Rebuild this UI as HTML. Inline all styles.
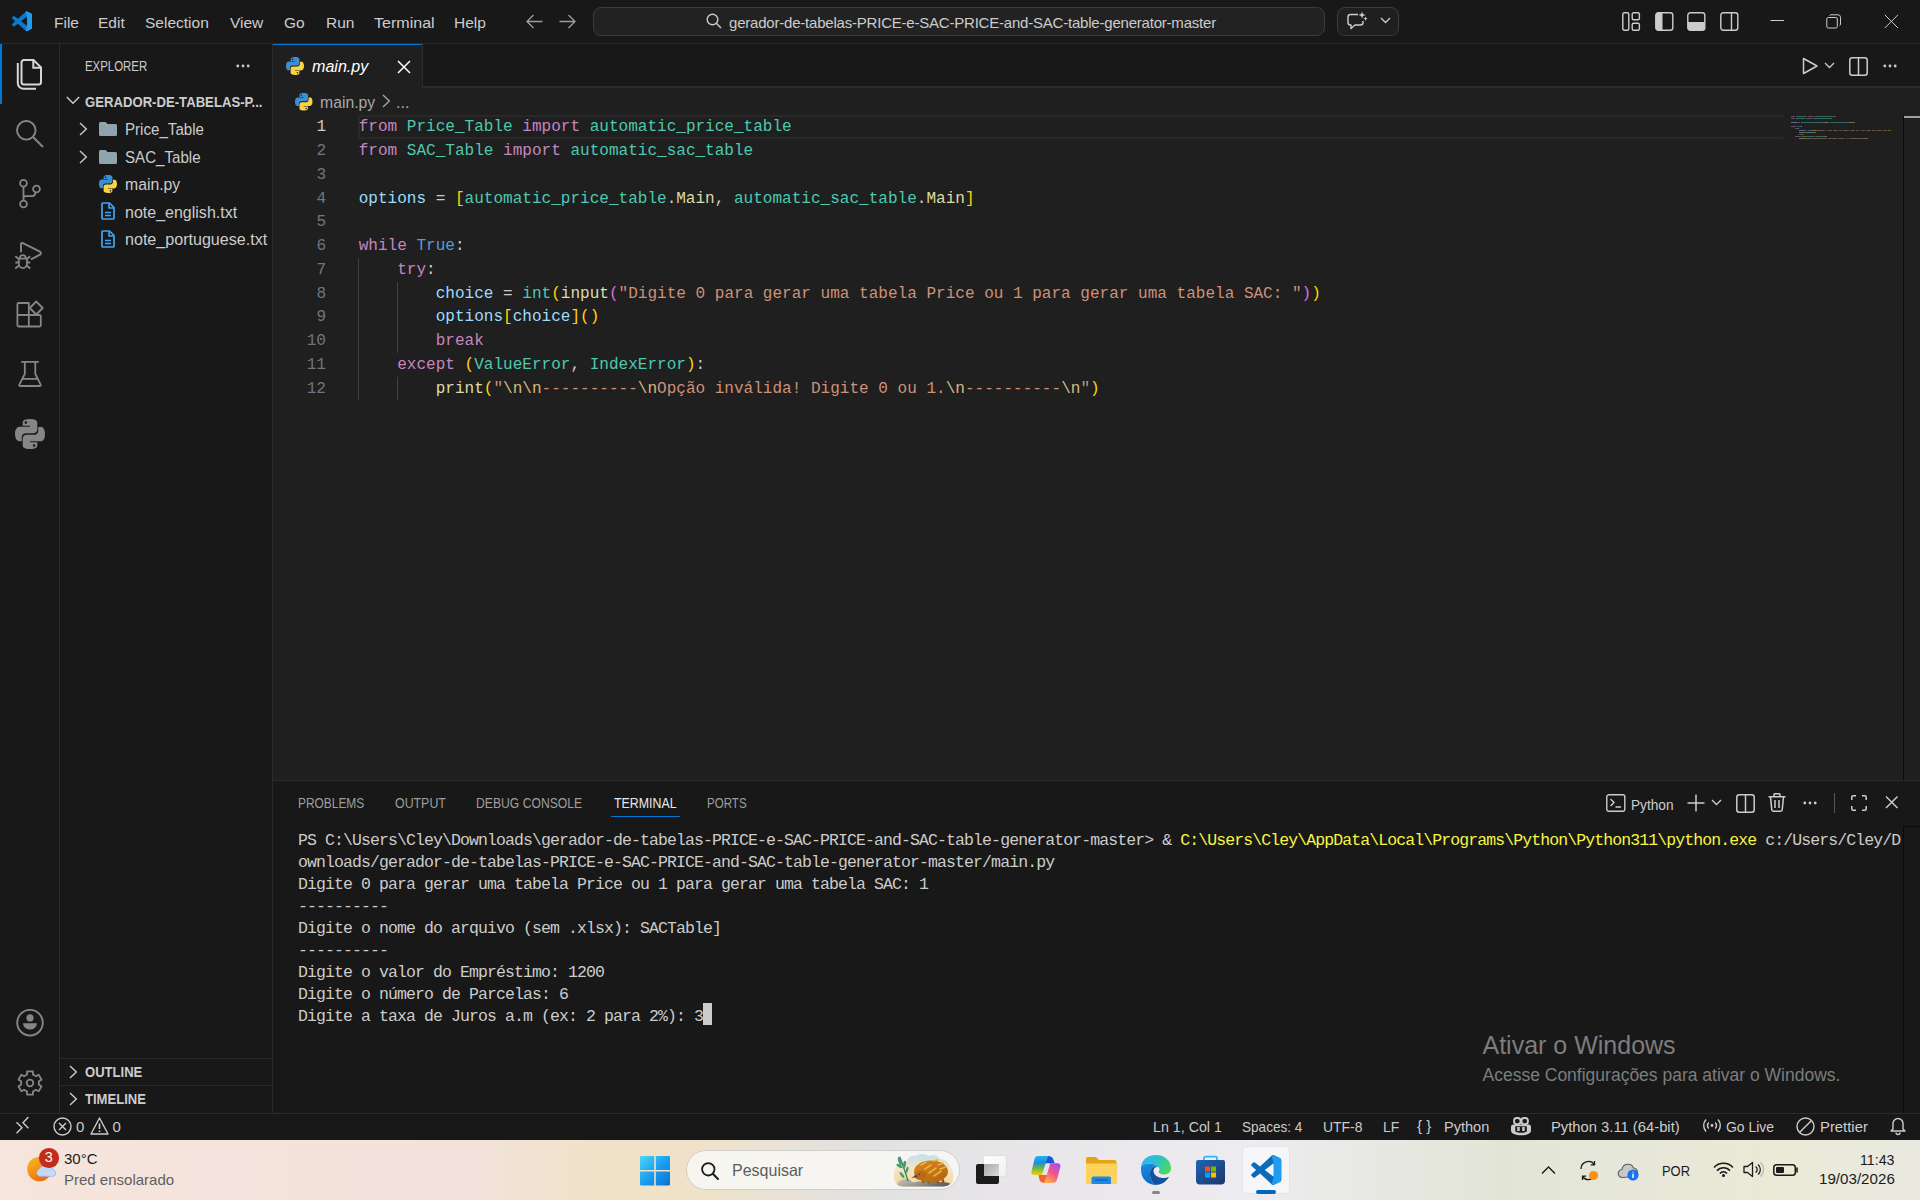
<!DOCTYPE html>
<html><head><meta charset="utf-8">
<style>
*{box-sizing:border-box;margin:0;padding:0}
html,body{width:1920px;height:1200px;overflow:hidden;background:#181818;font-family:"Liberation Sans",sans-serif;color:#cccccc}
.a{position:absolute;white-space:pre}
.sx{display:inline-block;transform-origin:0 50%}
svg{position:absolute;overflow:visible}
.mono{font-family:"Liberation Mono",monospace}
/* regions */
#title{position:absolute;left:0;top:0;width:1920px;height:44px;background:#181818;border-bottom:1px solid #2b2b2b}
#act{position:absolute;left:0;top:44px;width:60px;height:1069px;background:#181818;border-right:1px solid #2b2b2b}
#side{position:absolute;left:60px;top:44px;width:213px;height:1069px;background:#181818;border-right:1px solid #2b2b2b}
#tabs{position:absolute;left:273px;top:44px;width:1647px;height:44px;background:#181818;border-bottom:2px solid #2b2b2b}
#editor{position:absolute;left:273px;top:88px;width:1647px;height:692px;background:#1f1f1f}
#panel{position:absolute;left:273px;top:780px;width:1647px;height:333px;background:#181818;border-top:1px solid #2b2b2b}
#status{position:absolute;left:0;top:1113px;width:1920px;height:27px;background:#181818;border-top:1px solid #2b2b2b}
#taskbar{position:absolute;left:0;top:1140px;width:1920px;height:60px;background:linear-gradient(90deg,#f5e5dd 0px,#f2e2db 480px,#f0e2c8 590px,#efe2c9 700px,#e9e2d6 780px,#e2e1e0 860px,#e7e5e8 1000px,#eeecf0 1250px,#e9e9e6 1350px,#e2e5d6 1500px,#e6e7da 1620px,#ebe9d6 1760px,#e9e9e1 1920px)}
.menu{font-size:15.5px;color:#cccccc;top:13px;line-height:20px}
.code{font-family:"Liberation Mono",monospace;font-size:16.04px;line-height:23.75px;height:23.75px;margin-top:0.9px}
.ln{font-family:"Liberation Mono",monospace;font-size:16.04px;line-height:23.75px;color:#6e7681;text-align:right;width:40px;left:286px;margin-top:0.9px}
.k{color:#c586c0}.t{color:#4ec9b0}.v{color:#9cdcfe}.c{color:#569cd6}.f{color:#dcdcaa}.s{color:#ce9178}.e{color:#d7ba7d}.p{color:#cccccc}
.b1{color:#ffd700}.b2{color:#da70d6}
.term{font-family:"Liberation Mono",monospace;font-size:16.5px;letter-spacing:-0.9px;line-height:22px;color:#cccccc;left:298px}
</style></head><body>
<div id="title"></div>
<div id="act"></div>
<div id="side"></div>
<div id="tabs"></div>
<div id="editor"></div>
<div id="panel"></div>
<div id="status"></div>
<div id="taskbar"></div>

<!-- title bar menus -->
<div class="a menu" style="left:54px">File</div>
<div class="a menu" style="left:98px">Edit</div>
<div class="a menu" style="left:145px">Selection</div>
<div class="a menu" style="left:230px">View</div>
<div class="a menu" style="left:284px">Go</div>
<div class="a menu" style="left:326px">Run</div>
<div class="a menu" style="left:374px"><span class="sx" style="transform:scaleX(1.035)">Terminal</span></div>
<div class="a menu" style="left:454px">Help</div>


<!-- VS Code logo -->
<svg style="left:12px;top:10.5px" width="20" height="20.5" viewBox="0 0 100 100"><path fill="#0a7acc" d="M96.46 10.8L75.86.87a6.23 6.23 0 0 0-7.1 1.2L29.33 38.04 12.15 25a4.16 4.16 0 0 0-5.32.24l-5.5 5a4.17 4.17 0 0 0 0 6.16L16.23 50 1.330 63.6a4.17 4.17 0 0 0 0 6.16l5.5 5a4.16 4.16 0 0 0 5.32.24l17.18-13.040 39.43 35.97a6.22 6.22 0 0 0 7.1 1.2l20.6-9.92A6.25 6.25 0 0 0 100 83.6V16.4a6.25 6.25 0 0 0-3.54-5.6zM75.01 72.7L45.1 50l29.9-22.7z"/><path fill="#1f9cf0" d="M75.86.87a6.23 6.23 0 0 0-7.1 1.2L68 2.8 75.01 27.3V72.7L68 97.2l.76.7a6.22 6.22 0 0 0 7.1 1.2l20.6-9.92A6.25 6.25 0 0 0 100 83.6V16.4a6.25 6.25 0 0 0-3.54-5.6z"/></svg>
<!-- nav arrows -->
<svg style="left:526px;top:14px" width="17" height="15" viewBox="0 0 17 15"><path d="M16.5 7.5H1.5M7.5 1L1 7.5 7.5 14" fill="none" stroke="#9d9d9d" stroke-width="1.3"/></svg>
<svg style="left:559px;top:14px" width="17" height="15" viewBox="0 0 17 15"><path d="M0.5 7.5H15.5M9.5 1L16 7.5 9.5 14" fill="none" stroke="#9d9d9d" stroke-width="1.3"/></svg>
<!-- command center -->
<div class="a" style="left:593px;top:7px;width:732px;height:29px;border:1px solid #3c3c3c;border-radius:8px;background:#222222"></div>
<svg style="left:706px;top:13px" width="16" height="16" viewBox="0 0 16 16"><circle cx="6.5" cy="6.5" r="5.3" fill="none" stroke="#cccccc" stroke-width="1.4"/><path d="M10.3 10.3L15 15" stroke="#cccccc" stroke-width="1.5"/></svg>
<div class="a" style="left:729px;top:12.5px;font-size:15px;line-height:20px;color:#cccccc;letter-spacing:-0.21px">gerador-de-tabelas-PRICE-e-SAC-PRICE-and-SAC-table-generator-master</div>
<!-- copilot button -->
<div class="a" style="left:1337px;top:7px;width:62px;height:29px;border:1px solid #3c3c3c;border-radius:8px;background:#1f1f1f"></div>
<svg style="left:1346px;top:11px" width="22" height="20" viewBox="0 0 22 20"><path d="M12 3.5H4.5A2.5 2.5 0 0 0 2 6v5.5A2.5 2.5 0 0 0 4.5 14H5v3.5L9 14h5.5A2.5 2.5 0 0 0 17 11.5V10" fill="none" stroke="#cccccc" stroke-width="1.4" stroke-linejoin="round"/><path d="M16 0.5l.9 2.6 2.6.9-2.6.9-.9 2.6-.9-2.6-2.6-.9 2.6-.9z" fill="#cccccc"/><path d="M19.5 5.5l.6 1.6 1.6.6-1.6.6-.6 1.6-.6-1.6-1.6-.6 1.6-.6z" fill="#cccccc"/></svg>
<svg style="left:1380px;top:17px" width="11" height="7" viewBox="0 0 11 7"><path d="M1 1l4.5 4.5L10 1" fill="none" stroke="#cccccc" stroke-width="1.3"/></svg>
<!-- layout icons -->
<svg style="left:1622px;top:12px" width="19" height="19" viewBox="0 0 19 19"><rect x="0.8" y="0.8" width="6" height="17.4" rx="1.5" fill="none" stroke="#cccccc" stroke-width="1.4"/><rect x="10.2" y="0.8" width="7.2" height="7" rx="1.5" fill="none" stroke="#cccccc" stroke-width="1.4"/><rect x="10.2" y="11.2" width="7.2" height="7" rx="1.5" fill="none" stroke="#cccccc" stroke-width="1.4"/></svg>
<svg style="left:1655px;top:12px" width="19" height="19" viewBox="0 0 19 19"><rect x="0.8" y="0.8" width="17" height="17.4" rx="2.5" fill="none" stroke="#cccccc" stroke-width="1.4"/><path d="M3 0.8H7.5V18.2H3A2.2 2.2 0 0 1 0.8 16V3A2.2 2.2 0 0 1 3 0.8z" fill="#cccccc"/></svg>
<svg style="left:1687px;top:12px" width="19" height="19" viewBox="0 0 19 19"><rect x="0.8" y="0.8" width="17" height="17.4" rx="2.5" fill="none" stroke="#cccccc" stroke-width="1.4"/><path d="M0.8 10H17.8V16A2.2 2.2 0 0 1 15.6 18.2H3A2.2 2.2 0 0 1 0.8 16z" fill="#cccccc"/></svg>
<svg style="left:1720px;top:12px" width="19" height="19" viewBox="0 0 19 19"><rect x="0.8" y="0.8" width="17" height="17.4" rx="2.5" fill="none" stroke="#cccccc" stroke-width="1.4"/><path d="M11.5 1V18" stroke="#cccccc" stroke-width="1.4"/></svg>
<!-- window controls -->
<svg style="left:1770px;top:15px" width="15" height="12" viewBox="0 0 15 12"><path d="M0.5 5.5H14" stroke="#cccccc" stroke-width="1"/></svg>
<svg style="left:1826px;top:14px" width="16" height="16" viewBox="0 0 16 16"><rect x="0.8" y="3.5" width="10.5" height="10.5" rx="1.5" fill="none" stroke="#cccccc" stroke-width="1"/><path d="M3.5 1.5A1.8 1.8 0 0 1 5 0.8H12A2.5 2.5 0 0 1 14.5 3.3V10A1.8 1.8 0 0 1 13.7 11.6" fill="none" stroke="#cccccc" stroke-width="1"/></svg>
<svg style="left:1884px;top:14px" width="15" height="15" viewBox="0 0 15 15"><path d="M0.8 0.8L14 14M14 0.8L0.8 14" stroke="#cccccc" stroke-width="1"/></svg>

<!-- activity bar -->
<div class="a" style="left:0;top:44px;width:2px;height:60px;background:#0078d4"></div>
<svg style="left:16px;top:58px" width="27" height="32" viewBox="0 0 27 32"><path d="M8 2H17.5L25 9.5V24A2.5 2.5 0 0 1 22.5 26.5H8A2.5 2.5 0 0 1 5.5 24V4.5A2.5 2.5 0 0 1 8 2z" fill="none" stroke="#d7d7d7" stroke-width="2"/><path d="M17.3 2.5V9.7H24.5" fill="none" stroke="#d7d7d7" stroke-width="2"/><path d="M1.8 5V25A5.8 5.8 0 0 0 7.6 30.8H20" fill="none" stroke="#d7d7d7" stroke-width="2"/></svg>
<svg style="left:16px;top:120px" width="28" height="28" viewBox="0 0 28 28"><circle cx="10.3" cy="10.3" r="9.3" fill="none" stroke="#868686" stroke-width="1.9"/><path d="M17 17L27 27" stroke="#868686" stroke-width="2"/></svg>
<svg style="left:18px;top:178px" width="24" height="32" viewBox="0 0 24 32"><circle cx="5.5" cy="5.3" r="3.4" fill="none" stroke="#868686" stroke-width="1.8"/><circle cx="5.5" cy="26" r="3.4" fill="none" stroke="#868686" stroke-width="1.8"/><circle cx="18.5" cy="11" r="3.4" fill="none" stroke="#868686" stroke-width="1.8"/><path d="M5.5 8.7V22.6M17.5 14.3Q17 18.2 13.5 18.2H7.5Q5.5 18.2 5.5 20.5" fill="none" stroke="#868686" stroke-width="1.8"/></svg>
<svg style="left:10px;top:235px" width="40" height="40" viewBox="0 0 40 40"><path d="M11 17.2V9.2Q11 7.4 12.8 8.2L30 16.6Q31.8 18.5 30 19.6L21 24.3" fill="none" stroke="#868686" stroke-width="1.9" stroke-linejoin="round"/><path d="M9.9 23.3A2.9 3.2 0 0 1 15.7 23.3M8.8 23.7H17M8.8 23.7V28.5A4.1 4.6 0 0 0 17 28.5V23.7M5.3 21.3L8.8 24M17 24L20.2 21.3M5.3 27.5H8.8M17 27.5H20.2M5.3 33.5L9 30.5M16.8 30.5L20.2 33.5" fill="none" stroke="#868686" stroke-width="1.8"/></svg>
<svg style="left:10px;top:290px" width="40" height="40" viewBox="0 0 40 40"><path d="M8.6 13H18.8V36.5H8.6A1.2 1.2 0 0 1 7.4 35.3V14.2A1.2 1.2 0 0 1 8.6 13zM7.4 25H29.6A1.2 1.2 0 0 1 30.8 26.2V35.3A1.2 1.2 0 0 1 29.6 36.5H18.8" fill="none" stroke="#868686" stroke-width="1.8"/><path d="M26.2 11.5L32.7 18 26.2 24.5 19.7 18z" fill="none" stroke="#868686" stroke-width="1.8" stroke-linejoin="round"/></svg>
<svg style="left:18px;top:360px" width="24" height="28" viewBox="0 0 24 28"><path d="M3.2 1.8H20.8M6.8 1.8V14L1.3 24.6A1 1 0 0 0 2.2 26H21.8A1 1 0 0 0 22.7 24.6L17.3 14V1.8M4.3 18.8H19.7" fill="none" stroke="#868686" stroke-width="1.8" stroke-linejoin="round"/></svg>
<svg style="left:15px;top:419px" width="30" height="30" viewBox="0 0 16 16"><path fill="#868686" d="M7.9 0C3.9 0 4.1 1.8 4.1 1.8v1.8h3.9v.5H2.6S0 3.9 0 7.9s2.3 3.9 2.3 3.9h1.3V9.9s-.1-2.3 2.3-2.3h3.8s2.2 0 2.2-2.1V1.9S12.2 0 7.9 0zM5.8 1.2a.7.7 0 1 1 0 1.4.7.7 0 0 1 0-1.4z"/><path fill="#868686" d="M8.1 16c4 0 3.8-1.8 3.8-1.8v-1.8H8v-.5h5.4s2.6.3 2.6-3.8-2.3-3.9-2.3-3.9h-1.3v1.9s.1 2.3-2.3 2.3H6.3s-2.2 0-2.2 2.1v3.6S3.8 16 8.1 16zm2.1-1.2a.7.7 0 1 1 0-1.4.7.7 0 0 1 0 1.4z"/></svg>
<svg style="left:16px;top:1009px" width="28" height="28" viewBox="0 0 28 28"><circle cx="14" cy="13.7" r="12.8" fill="none" stroke="#868686" stroke-width="1.9"/><circle cx="14" cy="8.9" r="3.6" fill="#868686"/><path d="M7 14.3H21A7 6.3 0 0 1 7 14.3z" fill="#868686"/></svg>
<svg style="left:17px;top:1070px" width="26" height="26" viewBox="0 0 26 26"><path d="M10.07 4.49 L10.10 1.36 L15.90 1.36 L15.93 4.49 L18.90 6.21 L21.63 4.66 L24.54 9.69 L21.83 11.28 L21.83 14.72 L24.54 16.31 L21.63 21.34 L18.90 19.79 L15.93 21.51 L15.90 24.64 L10.10 24.64 L10.07 21.51 L7.10 19.79 L4.37 21.34 L1.46 16.31 L4.17 14.72 L4.17 11.28 L1.46 9.69 L4.37 4.66 L7.10 6.21z" fill="none" stroke="#868686" stroke-width="1.8" stroke-linejoin="round"/><circle cx="13" cy="13" r="3.3" fill="none" stroke="#868686" stroke-width="1.8"/></svg>

<!-- sidebar -->
<div class="a" style="left:85px;top:58px;font-size:13.75px;line-height:18px;color:#cccccc"><span class="sx" style="transform:scaleX(0.83)">EXPLORER</span></div>
<svg style="left:236px;top:64px" width="14" height="4" viewBox="0 0 14 4"><circle cx="1.8" cy="2" r="1.4" fill="#cccccc"/><circle cx="7" cy="2" r="1.4" fill="#cccccc"/><circle cx="12.2" cy="2" r="1.4" fill="#cccccc"/></svg>
<svg style="left:66px;top:96px" width="14" height="9" viewBox="0 0 14 9"><path d="M0.8 1L7 7.3 13.2 1" fill="none" stroke="#cccccc" stroke-width="1.4"/></svg>
<div class="a" style="left:85px;top:94px;font-size:13.75px;line-height:18px;font-weight:bold;color:#cccccc"><span class="sx" style="transform:scaleX(0.955)">GERADOR-DE-TABELAS-P...</span></div>
<svg style="left:79px;top:122px" width="9" height="14" viewBox="0 0 9 14"><path d="M1 1L7.3 7 1 13" fill="none" stroke="#cccccc" stroke-width="1.4"/></svg>
<svg style="left:99px;top:122px" width="18" height="14" viewBox="0 0 18 14"><path d="M0 1.5A1.5 1.5 0 0 1 1.5 0H6.5L8.5 2H16.5A1.5 1.5 0 0 1 18 3.5V12.5A1.5 1.5 0 0 1 16.5 14H1.5A1.5 1.5 0 0 1 0 12.5z" fill="#90a4ae"/></svg>
<div class="a" style="left:125px;top:119px;font-size:16.25px;line-height:20px;color:#cccccc"><span class="sx" style="transform:scaleX(0.93)">Price_Table</span></div>
<svg style="left:79px;top:150px" width="9" height="14" viewBox="0 0 9 14"><path d="M1 1L7.3 7 1 13" fill="none" stroke="#cccccc" stroke-width="1.4"/></svg>
<svg style="left:99px;top:150px" width="18" height="14" viewBox="0 0 18 14"><path d="M0 1.5A1.5 1.5 0 0 1 1.5 0H6.5L8.5 2H16.5A1.5 1.5 0 0 1 18 3.5V12.5A1.5 1.5 0 0 1 16.5 14H1.5A1.5 1.5 0 0 1 0 12.5z" fill="#90a4ae"/></svg>
<div class="a" style="left:125px;top:146.5px;font-size:16.25px;line-height:20px;color:#cccccc"><span class="sx" style="transform:scaleX(0.93)">SAC_Table</span></div>
<svg style="left:99px;top:175px" width="18" height="18" viewBox="0 0 16 16" class="py"><path fill="#3a8ed2" d="M7.9 0C3.9 0 4.1 1.8 4.1 1.8v1.8h3.9v.5H2.6S0 3.9 0 7.9s2.3 3.9 2.3 3.9h1.3V9.9s-.1-2.3 2.3-2.3h3.8s2.2 0 2.2-2.1V1.9S12.2 0 7.9 0zM5.8 1.2a.7.7 0 1 1 0 1.4.7.7 0 0 1 0-1.4z"/><path fill="#f7d345" d="M8.1 16c4 0 3.8-1.8 3.8-1.8v-1.8H8v-.5h5.4s2.6.3 2.6-3.8-2.3-3.9-2.3-3.9h-1.3v1.9s.1 2.3-2.3 2.3H6.3s-2.2 0-2.2 2.1v3.6S3.8 16 8.1 16zm2.1-1.2a.7.7 0 1 1 0-1.4.7.7 0 0 1 0 1.4z"/></svg>
<div class="a" style="left:125px;top:174.3px;font-size:16.25px;line-height:20px;color:#cccccc"><span class="sx" style="transform:scaleX(0.97)">main.py</span></div>
<svg style="left:101px;top:202px" width="14" height="18" viewBox="0 0 14 18"><path d="M2 1H8.5L13 5.5V16A1 1 0 0 1 12 17H2A1 1 0 0 1 1 16V2A1 1 0 0 1 2 1z" fill="none" stroke="#42a5f5" stroke-width="1.7" stroke-linejoin="round"/><path d="M8 1.5V6H12.5M4 10.5H10M4 13.5H10" fill="none" stroke="#42a5f5" stroke-width="1.6"/></svg>
<div class="a" style="left:125px;top:201.5px;font-size:16.25px;line-height:20px;color:#cccccc"><span class="sx" style="transform:scaleX(0.985)">note_english.txt</span></div>
<svg style="left:101px;top:229.5px" width="14" height="18" viewBox="0 0 14 18"><path d="M2 1H8.5L13 5.5V16A1 1 0 0 1 12 17H2A1 1 0 0 1 1 16V2A1 1 0 0 1 2 1z" fill="none" stroke="#42a5f5" stroke-width="1.7" stroke-linejoin="round"/><path d="M8 1.5V6H12.5M4 10.5H10M4 13.5H10" fill="none" stroke="#42a5f5" stroke-width="1.6"/></svg>
<div class="a" style="left:125px;top:228.5px;font-size:16.25px;line-height:20px;color:#cccccc"><span class="sx" style="transform:scaleX(0.99)">note_portuguese.txt</span></div>
<!-- outline / timeline -->
<div class="a" style="left:60px;top:1058px;width:212px;height:1px;background:#2b2b2b"></div>
<div class="a" style="left:60px;top:1085px;width:212px;height:1px;background:#2b2b2b"></div>
<svg style="left:69px;top:1065px" width="9" height="14" viewBox="0 0 9 14"><path d="M1 1L7.3 7 1 13" fill="none" stroke="#cccccc" stroke-width="1.4"/></svg>
<div class="a" style="left:85px;top:1064px;font-size:13.75px;line-height:18px;font-weight:bold;color:#cccccc"><span class="sx" style="transform:scaleX(0.95)">OUTLINE</span></div>
<svg style="left:69px;top:1092px" width="9" height="14" viewBox="0 0 9 14"><path d="M1 1L7.3 7 1 13" fill="none" stroke="#cccccc" stroke-width="1.4"/></svg>
<div class="a" style="left:85px;top:1091px;font-size:13.75px;line-height:18px;font-weight:bold;color:#cccccc"><span class="sx" style="transform:scaleX(0.95)">TIMELINE</span></div>

<!-- tab -->
<div class="a" style="left:273px;top:44px;width:150px;height:44px;background:#1f1f1f;border-right:1px solid #2b2b2b"></div>
<div class="a" style="left:273px;top:43.5px;width:149px;height:1.6px;background:#0078d4"></div>
<svg style="left:286px;top:57px" width="18" height="18" viewBox="0 0 16 16"><path fill="#3a8ed2" d="M7.9 0C3.9 0 4.1 1.8 4.1 1.8v1.8h3.9v.5H2.6S0 3.9 0 7.9s2.3 3.9 2.3 3.9h1.3V9.9s-.1-2.3 2.3-2.3h3.8s2.2 0 2.2-2.1V1.9S12.2 0 7.9 0zM5.8 1.2a.7.7 0 1 1 0 1.4.7.7 0 0 1 0-1.4z"/><path fill="#f7d345" d="M8.1 16c4 0 3.8-1.8 3.8-1.8v-1.8H8v-.5h5.4s2.6.3 2.6-3.8-2.3-3.9-2.3-3.9h-1.3v1.9s.1 2.3-2.3 2.3H6.3s-2.2 0-2.2 2.1v3.6S3.8 16 8.1 16zm2.1-1.2a.7.7 0 1 1 0-1.4.7.7 0 0 1 0 1.4z"/></svg>
<div class="a" style="left:312px;top:56px;font-size:16.25px;line-height:20px;font-style:italic;color:#ffffff"><span class="sx" style="transform:scaleX(0.99)">main.py</span></div>
<svg style="left:397px;top:59.5px" width="14" height="14" viewBox="0 0 14 14"><path d="M1 1L13 13M13 1L1 13" stroke="#ffffff" stroke-width="1.5"/></svg>
<!-- editor actions -->
<svg style="left:1802px;top:57px" width="16" height="18" viewBox="0 0 16 18"><path d="M1.5 1.5V16.5L15 9z" fill="none" stroke="#cccccc" stroke-width="1.5" stroke-linejoin="round"/></svg>
<svg style="left:1824px;top:62px" width="11" height="7" viewBox="0 0 11 7"><path d="M1 1l4.5 4.5L10 1" fill="none" stroke="#cccccc" stroke-width="1.3"/></svg>
<svg style="left:1849px;top:57px" width="19" height="19" viewBox="0 0 19 19"><rect x="0.8" y="0.8" width="17.4" height="17.4" rx="2.5" fill="none" stroke="#cccccc" stroke-width="1.5"/><path d="M9.5 1V18" stroke="#cccccc" stroke-width="1.5"/></svg>
<svg style="left:1883px;top:64px" width="14" height="4" viewBox="0 0 14 4"><circle cx="1.8" cy="2" r="1.4" fill="#cccccc"/><circle cx="7" cy="2" r="1.4" fill="#cccccc"/><circle cx="12.2" cy="2" r="1.4" fill="#cccccc"/></svg>
<!-- breadcrumbs -->
<svg style="left:295px;top:92.5px" width="17.5" height="17.5" viewBox="0 0 16 16"><path fill="#3a8ed2" d="M7.9 0C3.9 0 4.1 1.8 4.1 1.8v1.8h3.9v.5H2.6S0 3.9 0 7.9s2.3 3.9 2.3 3.9h1.3V9.9s-.1-2.3 2.3-2.3h3.8s2.2 0 2.2-2.1V1.9S12.2 0 7.9 0zM5.8 1.2a.7.7 0 1 1 0 1.4.7.7 0 0 1 0-1.4z"/><path fill="#f7d345" d="M8.1 16c4 0 3.8-1.8 3.8-1.8v-1.8H8v-.5h5.4s2.6.3 2.6-3.8-2.3-3.9-2.3-3.9h-1.3v1.9s.1 2.3-2.3 2.3H6.3s-2.2 0-2.2 2.1v3.6S3.8 16 8.1 16zm2.1-1.2a.7.7 0 1 1 0-1.4.7.7 0 0 1 0 1.4z"/></svg>
<div class="a" style="left:320px;top:92px;font-size:16.25px;line-height:20px;color:#a9a9a9"><span class="sx" style="transform:scaleX(0.97)">main.py</span></div>
<svg style="left:382px;top:94px" width="9" height="14" viewBox="0 0 9 14"><path d="M1 1L7.3 7 1 13" fill="none" stroke="#a9a9a9" stroke-width="1.3"/></svg>
<div class="a" style="left:396px;top:92px;font-size:16.25px;line-height:20px;color:#a9a9a9">...</div>

<!-- code -->
<div class="a" style="left:358px;top:115px;width:1425px;height:24px;border:2px solid #282828;border-right:none"></div>
<div class="a" style="left:358px;top:257.90px;width:1px;height:23.75px;background:#404040"></div>
<div class="a" style="left:358px;top:281.65px;width:1px;height:23.75px;background:#404040"></div>
<div class="a" style="left:358px;top:305.40px;width:1px;height:23.75px;background:#404040"></div>
<div class="a" style="left:358px;top:329.15px;width:1px;height:23.75px;background:#404040"></div>
<div class="a" style="left:358px;top:352.90px;width:1px;height:23.75px;background:#404040"></div>
<div class="a" style="left:358px;top:376.65px;width:1px;height:23.75px;background:#404040"></div>
<div class="a" style="left:397px;top:281.65px;width:1px;height:23.75px;background:#404040"></div>
<div class="a" style="left:397px;top:305.40px;width:1px;height:23.75px;background:#404040"></div>
<div class="a" style="left:397px;top:329.15px;width:1px;height:23.75px;background:#404040"></div>
<div class="a" style="left:397px;top:376.65px;width:1px;height:23.75px;background:#404040"></div>
<div class="a ln" style="top:115.40px;color:#cccccc">1</div>
<div class="a code" style="left:358.75px;top:115.40px"><span class="k">from</span><span class="p"> </span><span class="t">Price_Table</span><span class="p"> </span><span class="k">import</span><span class="p"> </span><span class="t">automatic_price_table</span></div>
<div class="a ln" style="top:139.15px;color:#6e7681">2</div>
<div class="a code" style="left:358.75px;top:139.15px"><span class="k">from</span><span class="p"> </span><span class="t">SAC_Table</span><span class="p"> </span><span class="k">import</span><span class="p"> </span><span class="t">automatic_sac_table</span></div>
<div class="a ln" style="top:162.90px;color:#6e7681">3</div>
<div class="a ln" style="top:186.65px;color:#6e7681">4</div>
<div class="a code" style="left:358.75px;top:186.65px"><span class="v">options</span><span class="p"> = </span><span class="b1">[</span><span class="t">automatic_price_table</span><span class="p">.</span><span class="f">Main</span><span class="p">, </span><span class="t">automatic_sac_table</span><span class="p">.</span><span class="f">Main</span><span class="b1">]</span></div>
<div class="a ln" style="top:210.40px;color:#6e7681">5</div>
<div class="a ln" style="top:234.15px;color:#6e7681">6</div>
<div class="a code" style="left:358.75px;top:234.15px"><span class="k">while</span><span class="p"> </span><span class="c">True</span><span class="p">:</span></div>
<div class="a ln" style="top:257.90px;color:#6e7681">7</div>
<div class="a code" style="left:358.75px;top:257.90px"><span class="p">    </span><span class="k">try</span><span class="p">:</span></div>
<div class="a ln" style="top:281.65px;color:#6e7681">8</div>
<div class="a code" style="left:358.75px;top:281.65px"><span class="p">        </span><span class="v">choice</span><span class="p"> = </span><span class="t">int</span><span class="b1">(</span><span class="f">input</span><span class="b2">(</span><span class="s">&quot;Digite 0 para gerar uma tabela Price ou 1 para gerar uma tabela SAC: &quot;</span><span class="b2">)</span><span class="b1">)</span></div>
<div class="a ln" style="top:305.40px;color:#6e7681">9</div>
<div class="a code" style="left:358.75px;top:305.40px"><span class="p">        </span><span class="v">options</span><span class="b1">[</span><span class="v">choice</span><span class="b1">]</span><span class="b1">()</span></div>
<div class="a ln" style="top:329.15px;color:#6e7681">10</div>
<div class="a code" style="left:358.75px;top:329.15px"><span class="p">        </span><span class="k">break</span></div>
<div class="a ln" style="top:352.90px;color:#6e7681">11</div>
<div class="a code" style="left:358.75px;top:352.90px"><span class="p">    </span><span class="k">except</span><span class="p"> </span><span class="b1">(</span><span class="t">ValueError</span><span class="p">, </span><span class="t">IndexError</span><span class="b1">)</span><span class="p">:</span></div>
<div class="a ln" style="top:376.65px;color:#6e7681">12</div>
<div class="a code" style="left:358.75px;top:376.65px"><span class="p">        </span><span class="f">print</span><span class="b1">(</span><span class="s">&quot;</span><span class="e">\n\n</span><span class="s">----------</span><span class="e">\n</span><span class="s">Opção inválida! Digite 0 ou 1.</span><span class="e">\n</span><span class="s">----------</span><span class="e">\n</span><span class="s">&quot;</span><span class="b1">)</span></div>
<div class="a" style="left:1791px;top:115.5px;width:4px;height:1.7px;background:#c586c0;opacity:0.42"></div><div class="a" style="left:1796px;top:115.5px;width:11px;height:1.7px;background:#4ec9b0;opacity:0.42"></div><div class="a" style="left:1808px;top:115.5px;width:6px;height:1.7px;background:#c586c0;opacity:0.42"></div><div class="a" style="left:1815px;top:115.5px;width:21px;height:1.7px;background:#4ec9b0;opacity:0.42"></div><div class="a" style="left:1791px;top:117.5px;width:4px;height:1.7px;background:#c586c0;opacity:0.42"></div><div class="a" style="left:1796px;top:117.5px;width:9px;height:1.7px;background:#4ec9b0;opacity:0.42"></div><div class="a" style="left:1806px;top:117.5px;width:6px;height:1.7px;background:#c586c0;opacity:0.42"></div><div class="a" style="left:1813px;top:117.5px;width:19px;height:1.7px;background:#4ec9b0;opacity:0.42"></div><div class="a" style="left:1791px;top:121.5px;width:7px;height:1.7px;background:#9cdcfe;opacity:0.42"></div><div class="a" style="left:1799px;top:121.5px;width:1px;height:1.7px;background:#cccccc;opacity:0.42"></div><div class="a" style="left:1801px;top:121.5px;width:1px;height:1.7px;background:#ffd700;opacity:0.42"></div><div class="a" style="left:1802px;top:121.5px;width:21px;height:1.7px;background:#4ec9b0;opacity:0.42"></div><div class="a" style="left:1823px;top:121.5px;width:1px;height:1.7px;background:#cccccc;opacity:0.42"></div><div class="a" style="left:1824px;top:121.5px;width:4px;height:1.7px;background:#dcdcaa;opacity:0.42"></div><div class="a" style="left:1828px;top:121.5px;width:1px;height:1.7px;background:#cccccc;opacity:0.42"></div><div class="a" style="left:1830px;top:121.5px;width:19px;height:1.7px;background:#4ec9b0;opacity:0.42"></div><div class="a" style="left:1849px;top:121.5px;width:1px;height:1.7px;background:#cccccc;opacity:0.42"></div><div class="a" style="left:1850px;top:121.5px;width:4px;height:1.7px;background:#dcdcaa;opacity:0.42"></div><div class="a" style="left:1854px;top:121.5px;width:1px;height:1.7px;background:#ffd700;opacity:0.42"></div><div class="a" style="left:1791px;top:125.5px;width:5px;height:1.7px;background:#c586c0;opacity:0.42"></div><div class="a" style="left:1797px;top:125.5px;width:4px;height:1.7px;background:#569cd6;opacity:0.42"></div><div class="a" style="left:1801px;top:125.5px;width:1px;height:1.7px;background:#cccccc;opacity:0.42"></div><div class="a" style="left:1795px;top:127.5px;width:3px;height:1.7px;background:#c586c0;opacity:0.42"></div><div class="a" style="left:1798px;top:127.5px;width:1px;height:1.7px;background:#cccccc;opacity:0.42"></div><div class="a" style="left:1799px;top:129.5px;width:6px;height:1.7px;background:#9cdcfe;opacity:0.42"></div><div class="a" style="left:1806px;top:129.5px;width:1px;height:1.7px;background:#cccccc;opacity:0.42"></div><div class="a" style="left:1808px;top:129.5px;width:3px;height:1.7px;background:#4ec9b0;opacity:0.42"></div><div class="a" style="left:1811px;top:129.5px;width:1px;height:1.7px;background:#ffd700;opacity:0.42"></div><div class="a" style="left:1812px;top:129.5px;width:5px;height:1.7px;background:#dcdcaa;opacity:0.42"></div><div class="a" style="left:1817px;top:129.5px;width:1px;height:1.7px;background:#da70d6;opacity:0.42"></div><div class="a" style="left:1818px;top:129.5px;width:7px;height:1.7px;background:#ce9178;opacity:0.42"></div><div class="a" style="left:1826px;top:129.5px;width:1px;height:1.7px;background:#ce9178;opacity:0.42"></div><div class="a" style="left:1828px;top:129.5px;width:4px;height:1.7px;background:#ce9178;opacity:0.42"></div><div class="a" style="left:1833px;top:129.5px;width:5px;height:1.7px;background:#ce9178;opacity:0.42"></div><div class="a" style="left:1839px;top:129.5px;width:3px;height:1.7px;background:#ce9178;opacity:0.42"></div><div class="a" style="left:1843px;top:129.5px;width:6px;height:1.7px;background:#ce9178;opacity:0.42"></div><div class="a" style="left:1850px;top:129.5px;width:5px;height:1.7px;background:#ce9178;opacity:0.42"></div><div class="a" style="left:1856px;top:129.5px;width:2px;height:1.7px;background:#ce9178;opacity:0.42"></div><div class="a" style="left:1859px;top:129.5px;width:1px;height:1.7px;background:#ce9178;opacity:0.42"></div><div class="a" style="left:1861px;top:129.5px;width:4px;height:1.7px;background:#ce9178;opacity:0.42"></div><div class="a" style="left:1866px;top:129.5px;width:5px;height:1.7px;background:#ce9178;opacity:0.42"></div><div class="a" style="left:1872px;top:129.5px;width:3px;height:1.7px;background:#ce9178;opacity:0.42"></div><div class="a" style="left:1876px;top:129.5px;width:6px;height:1.7px;background:#ce9178;opacity:0.42"></div><div class="a" style="left:1883px;top:129.5px;width:4px;height:1.7px;background:#ce9178;opacity:0.42"></div><div class="a" style="left:1888px;top:129.5px;width:1px;height:1.7px;background:#ce9178;opacity:0.42"></div><div class="a" style="left:1889px;top:129.5px;width:1px;height:1.7px;background:#da70d6;opacity:0.42"></div><div class="a" style="left:1890px;top:129.5px;width:1px;height:1.7px;background:#ffd700;opacity:0.42"></div><div class="a" style="left:1799px;top:131.5px;width:7px;height:1.7px;background:#9cdcfe;opacity:0.42"></div><div class="a" style="left:1806px;top:131.5px;width:1px;height:1.7px;background:#ffd700;opacity:0.42"></div><div class="a" style="left:1807px;top:131.5px;width:6px;height:1.7px;background:#9cdcfe;opacity:0.42"></div><div class="a" style="left:1813px;top:131.5px;width:1px;height:1.7px;background:#ffd700;opacity:0.42"></div><div class="a" style="left:1814px;top:131.5px;width:2px;height:1.7px;background:#ffd700;opacity:0.42"></div><div class="a" style="left:1799px;top:133.5px;width:5px;height:1.7px;background:#c586c0;opacity:0.42"></div><div class="a" style="left:1795px;top:135.5px;width:6px;height:1.7px;background:#c586c0;opacity:0.42"></div><div class="a" style="left:1802px;top:135.5px;width:1px;height:1.7px;background:#ffd700;opacity:0.42"></div><div class="a" style="left:1803px;top:135.5px;width:10px;height:1.7px;background:#4ec9b0;opacity:0.42"></div><div class="a" style="left:1813px;top:135.5px;width:1px;height:1.7px;background:#cccccc;opacity:0.42"></div><div class="a" style="left:1815px;top:135.5px;width:10px;height:1.7px;background:#4ec9b0;opacity:0.42"></div><div class="a" style="left:1825px;top:135.5px;width:1px;height:1.7px;background:#ffd700;opacity:0.42"></div><div class="a" style="left:1826px;top:135.5px;width:1px;height:1.7px;background:#cccccc;opacity:0.42"></div><div class="a" style="left:1799px;top:137.5px;width:5px;height:1.7px;background:#dcdcaa;opacity:0.42"></div><div class="a" style="left:1804px;top:137.5px;width:1px;height:1.7px;background:#ffd700;opacity:0.42"></div><div class="a" style="left:1805px;top:137.5px;width:1px;height:1.7px;background:#ce9178;opacity:0.42"></div><div class="a" style="left:1806px;top:137.5px;width:4px;height:1.7px;background:#d7ba7d;opacity:0.42"></div><div class="a" style="left:1810px;top:137.5px;width:10px;height:1.7px;background:#ce9178;opacity:0.42"></div><div class="a" style="left:1820px;top:137.5px;width:2px;height:1.7px;background:#d7ba7d;opacity:0.42"></div><div class="a" style="left:1822px;top:137.5px;width:5px;height:1.7px;background:#ce9178;opacity:0.42"></div><div class="a" style="left:1828px;top:137.5px;width:9px;height:1.7px;background:#ce9178;opacity:0.42"></div><div class="a" style="left:1838px;top:137.5px;width:6px;height:1.7px;background:#ce9178;opacity:0.42"></div><div class="a" style="left:1845px;top:137.5px;width:1px;height:1.7px;background:#ce9178;opacity:0.42"></div><div class="a" style="left:1847px;top:137.5px;width:2px;height:1.7px;background:#ce9178;opacity:0.42"></div><div class="a" style="left:1850px;top:137.5px;width:2px;height:1.7px;background:#ce9178;opacity:0.42"></div><div class="a" style="left:1852px;top:137.5px;width:2px;height:1.7px;background:#d7ba7d;opacity:0.42"></div><div class="a" style="left:1854px;top:137.5px;width:10px;height:1.7px;background:#ce9178;opacity:0.42"></div><div class="a" style="left:1864px;top:137.5px;width:2px;height:1.7px;background:#d7ba7d;opacity:0.42"></div><div class="a" style="left:1866px;top:137.5px;width:1px;height:1.7px;background:#ce9178;opacity:0.42"></div><div class="a" style="left:1867px;top:137.5px;width:1px;height:1.7px;background:#ffd700;opacity:0.42"></div>
<div class="a" style="left:1903px;top:115px;width:1px;height:665px;background:#0a0a0a"></div>
<div class="a" style="left:1904px;top:115.5px;width:16px;height:2px;background:#a0a0a0"></div>

<!-- panel tabs -->
<div class="a" style="left:298px;top:795px;font-size:13.75px;line-height:18px;color:#9d9d9d"><span class="sx" style="transform:scaleX(0.867)">PROBLEMS</span></div>
<div class="a" style="left:395px;top:795px;font-size:13.75px;line-height:18px;color:#9d9d9d"><span class="sx" style="transform:scaleX(0.9)">OUTPUT</span></div>
<div class="a" style="left:476px;top:795px;font-size:13.75px;line-height:18px;color:#9d9d9d"><span class="sx" style="transform:scaleX(0.885)">DEBUG CONSOLE</span></div>
<div class="a" style="left:613.5px;top:795px;font-size:13.75px;line-height:18px;color:#e7e7e7"><span class="sx" style="transform:scaleX(0.9)">TERMINAL</span></div>
<div class="a" style="left:611px;top:815.5px;width:69px;height:1.6px;background:#0078d4"></div>
<div class="a" style="left:707px;top:795px;font-size:13.75px;line-height:18px;color:#9d9d9d"><span class="sx" style="transform:scaleX(0.84)">PORTS</span></div>
<!-- panel toolbar -->
<svg style="left:1606px;top:794px" width="20" height="18" viewBox="0 0 20 18"><rect x="0.8" y="0.8" width="18" height="16.5" rx="2" fill="none" stroke="#cccccc" stroke-width="1.4"/><path d="M4.5 5L8 8.5 4.5 12M9.5 13H15" fill="none" stroke="#cccccc" stroke-width="1.4"/></svg>
<div class="a" style="left:1631px;top:794.5px;font-size:15px;line-height:20px;color:#cccccc"><span class="sx" style="transform:scaleX(0.91)">Python</span></div>
<svg style="left:1687px;top:794px" width="18" height="18" viewBox="0 0 18 18"><path d="M9 0.5V17.5M0.5 9H17.5" stroke="#cccccc" stroke-width="1.5"/></svg>
<svg style="left:1711px;top:799px" width="11" height="7" viewBox="0 0 11 7"><path d="M1 1l4.5 4.5L10 1" fill="none" stroke="#cccccc" stroke-width="1.3"/></svg>
<svg style="left:1736px;top:794px" width="19" height="19" viewBox="0 0 19 19"><rect x="0.8" y="0.8" width="17.4" height="17.4" rx="2.5" fill="none" stroke="#cccccc" stroke-width="1.5"/><path d="M9.5 1V18" stroke="#cccccc" stroke-width="1.5"/></svg>
<svg style="left:1768px;top:793px" width="18" height="19" viewBox="0 0 18 19"><path d="M0.5 3.8H17.5M6 3.5V1.5A0.8 0.8 0 0 1 6.8 0.8H11.2A0.8 0.8 0 0 1 12 1.5V3.5M2.5 4L3.8 16.8A1.5 1.5 0 0 0 5.3 18.2H12.7A1.5 1.5 0 0 0 14.2 16.8L15.5 4M7 7V15M11 7V15" fill="none" stroke="#cccccc" stroke-width="1.5"/></svg>
<svg style="left:1803px;top:801px" width="14" height="4" viewBox="0 0 14 4"><circle cx="1.8" cy="2" r="1.4" fill="#cccccc"/><circle cx="7" cy="2" r="1.4" fill="#cccccc"/><circle cx="12.2" cy="2" r="1.4" fill="#cccccc"/></svg>
<div class="a" style="left:1834px;top:793px;width:1px;height:20px;background:#555555"></div>
<svg style="left:1851px;top:794.5px" width="16" height="16" viewBox="0 0 16 16"><path d="M0.8 5V2A1.2 1.2 0 0 1 2 0.8H5M11 0.8H14A1.2 1.2 0 0 1 15.2 2V5M15.2 11V14A1.2 1.2 0 0 1 14 15.2H11M5 15.2H2A1.2 1.2 0 0 1 0.8 14V11" fill="none" stroke="#cccccc" stroke-width="1.5"/></svg>
<svg style="left:1884.5px;top:796px" width="13.5" height="12.5" viewBox="0 0 14 13"><path d="M1 0.5L13 12.5M13 0.5L1 12.5" stroke="#cccccc" stroke-width="1.5"/></svg>
<!-- terminal -->
<div class="a term" style="top:829.5px"><span style="color:#cccccc">PS C:\Users\Cley\Downloads\gerador-de-tabelas-PRICE-e-SAC-PRICE-and-SAC-table-generator-master&gt; &amp; </span><span style="color:#f5f543">C:\Users\Cley\AppData\Local\Programs\Python\Python311\python.exe</span><span style="color:#cccccc"> c:/Users/Cley/D</span></div>
<div class="a term" style="top:851.5px"><span style="color:#cccccc">ownloads/gerador-de-tabelas-PRICE-e-SAC-PRICE-and-SAC-table-generator-master/main.py</span></div>
<div class="a term" style="top:873.5px"><span style="color:#cccccc">Digite 0 para gerar uma tabela Price ou 1 para gerar uma tabela SAC: 1</span></div>
<div class="a term" style="top:895.5px"><span style="color:#cccccc">----------</span></div>
<div class="a term" style="top:917.5px"><span style="color:#cccccc">Digite o nome do arquivo (sem .xlsx): SACTable]</span></div>
<div class="a term" style="top:939.5px"><span style="color:#cccccc">----------</span></div>
<div class="a term" style="top:961.5px"><span style="color:#cccccc">Digite o valor do Empréstimo: 1200</span></div>
<div class="a term" style="top:983.5px"><span style="color:#cccccc">Digite o número de Parcelas: 6</span></div>
<div class="a term" style="top:1005.5px"><span style="color:#cccccc">Digite a taxa de Juros a.m (ex: 2 para 2%): 3</span></div>
<div class="a" style="left:703px;top:1003px;width:9px;height:22px;background:#cccccc"></div>
<div class="a" style="left:1903px;top:826px;width:17px;height:287px;border-left:1px solid #0a0a0a;border-top:1px solid #0a0a0a"></div>
<div class="a" style="left:1482.5px;top:1030px;font-size:25px;line-height:30px;color:#7d7d7d">Ativar o Windows</div>
<div class="a" style="left:1482.5px;top:1064px;font-size:17.5px;line-height:22px;color:#7d7d7d">Acesse Configurações para ativar o Windows.</div>

<!-- status bar -->
<svg style="left:10px;top:1112px" width="30" height="28" viewBox="0 0 30 28"><path d="M6.5 10.3L12 15.7 6.5 21.2M18.4 5.1L13 10.7 18.4 16.3" fill="none" stroke="#cccccc" stroke-width="1.4"/></svg>
<svg style="left:53px;top:1117px" width="19" height="19" viewBox="0 0 19 19"><circle cx="9.5" cy="9.5" r="8.5" fill="none" stroke="#cccccc" stroke-width="1.4"/><path d="M6 6L13 13M13 6L6 13" stroke="#cccccc" stroke-width="1.4"/></svg>
<div class="a" style="left:76px;top:1117px;font-size:15px;line-height:20px;color:#cccccc">0</div>
<svg style="left:89.5px;top:1117px" width="19" height="18" viewBox="0 0 19 18"><path d="M9.5 1L18 17H1z" fill="none" stroke="#cccccc" stroke-width="1.4" stroke-linejoin="round"/><path d="M9.5 6.5V12M9.5 13.5V15" stroke="#cccccc" stroke-width="1.6"/></svg>
<div class="a" style="left:112.5px;top:1117px;font-size:15px;line-height:20px;color:#cccccc">0</div>
<div class="a" style="left:1152.5px;top:1117px;font-size:15px;line-height:20px;color:#cccccc"><span class="sx" style="transform:scaleX(0.95)">Ln 1, Col 1</span></div>
<div class="a" style="left:1242px;top:1117px;font-size:15px;line-height:20px;color:#cccccc"><span class="sx" style="transform:scaleX(0.905)">Spaces: 4</span></div>
<div class="a" style="left:1323px;top:1117px;font-size:15px;line-height:20px;color:#cccccc"><span class="sx" style="transform:scaleX(0.93)">UTF-8</span></div>
<div class="a" style="left:1383px;top:1117px;font-size:15px;line-height:20px;color:#cccccc"><span class="sx" style="transform:scaleX(0.93)">LF</span></div>
<div class="a" style="left:1417px;top:1116px;font-size:15px;line-height:20px;color:#cccccc">{ }</div>
<div class="a" style="left:1444px;top:1117px;font-size:15px;line-height:20px;color:#cccccc"><span class="sx" style="transform:scaleX(0.97)">Python</span></div>
<svg style="left:1505px;top:1112px" width="35" height="28" viewBox="0 0 35 28"><rect x="9.1" y="6" width="6.4" height="6.1" rx="2.6" fill="none" stroke="#cccccc" stroke-width="1.9"/><rect x="16.5" y="6" width="6.4" height="6.1" rx="2.6" fill="none" stroke="#cccccc" stroke-width="1.9"/><path d="M6 15A2.5 2.5 0 0 1 8.5 12.5H23.5A2.5 2.5 0 0 1 26 15V18.5C26 21.7 21.5 23.3 16 23.3 10.5 23.3 6 21.7 6 18.5z" fill="#cccccc"/><path d="M10.3 14.2H21.8V19.5C20 20.5 18 20.8 16 20.8 14 20.8 12 20.5 10.3 19.5z" fill="#181818"/><rect x="12.2" y="15" width="2.5" height="4" fill="#cccccc"/><rect x="17.2" y="15" width="2.5" height="4" fill="#cccccc"/></svg>
<div class="a" style="left:1551px;top:1117px;font-size:15px;line-height:20px;color:#cccccc"><span class="sx" style="transform:scaleX(0.985)">Python 3.11 (64-bit)</span></div>
<svg style="left:1702px;top:1118px" width="20" height="15" viewBox="0 0 20 15"><path d="M4 1.5A9 9 0 0 0 4 13.5M16 1.5A9 9 0 0 1 16 13.5" fill="none" stroke="#cccccc" stroke-width="1.4"/><path d="M6.8 4.5A4.5 4.5 0 0 0 6.8 10.5M13.2 4.5A4.5 4.5 0 0 1 13.2 10.5" fill="none" stroke="#cccccc" stroke-width="1.4"/><circle cx="10" cy="7.5" r="1.4" fill="#cccccc"/></svg>
<div class="a" style="left:1726px;top:1117px;font-size:15px;line-height:20px;color:#cccccc"><span class="sx" style="transform:scaleX(0.93)">Go Live</span></div>
<svg style="left:1795.5px;top:1117px" width="19" height="19" viewBox="0 0 19 19"><circle cx="9.5" cy="9.5" r="8.5" fill="none" stroke="#cccccc" stroke-width="1.4"/><path d="M15.5 3.5L3.5 15.5" stroke="#cccccc" stroke-width="1.4"/></svg>
<div class="a" style="left:1819.5px;top:1117px;font-size:15px;line-height:20px;color:#cccccc"><span class="sx" style="transform:scaleX(0.99)">Prettier</span></div>
<svg style="left:1890px;top:1115.5px" width="16" height="18" viewBox="0 0 16 18"><path d="M3 13V7.5A5 5 0 0 1 13 7.5V13L15 15H1z" fill="none" stroke="#cccccc" stroke-width="1.4" stroke-linejoin="round"/><path d="M6 16.5A2 2 0 0 0 10 16.5" fill="none" stroke="#cccccc" stroke-width="1.4"/></svg>

<!-- taskbar -->
<svg style="left:26px;top:1156px" width="32" height="30" viewBox="0 0 32 30"><defs><linearGradient id="sun" x1="0" y1="0" x2="0.6" y2="1"><stop offset="0" stop-color="#f6c025"/><stop offset="1" stop-color="#f06a10"/></linearGradient><linearGradient id="cl" x1="0" y1="0" x2="0" y2="1"><stop offset="0" stop-color="#bcd6fa"/><stop offset="1" stop-color="#c9dcf5"/></linearGradient></defs><circle cx="13.5" cy="13" r="12.3" fill="url(#sun)"/><path d="M14 20.3A3.6 3.6 0 0 1 13.2 13.3 4.6 4.6 0 0 1 20.5 11 4.6 4.6 0 0 1 27.3 14.2 3.1 3.1 0 0 1 27.3 20.3z" fill="url(#cl)" stroke="#8db6f0" stroke-width="0.8"/></svg>
<div class="a" style="left:39px;top:1148px;width:19.5px;height:19.5px;border-radius:50%;background:#c42b1c"></div>
<div class="a" style="left:39px;top:1148px;width:19.5px;height:19.5px;font-size:14.5px;line-height:19.5px;text-align:center;color:#ffffff">3</div>
<div class="a" style="left:64px;top:1150px;font-size:15px;line-height:18px;color:#1b1b1b">30°C</div>
<div class="a" style="left:64px;top:1170.5px;font-size:15px;line-height:18px;color:#5f5f5f">Pred ensolarado</div>
<!-- start -->
<svg style="left:639.5px;top:1156px" width="30" height="29.5" viewBox="0 0 30 29.5"><defs><linearGradient id="win" x1="0" y1="0" x2="1" y2="1"><stop offset="0" stop-color="#4fd3fb"/><stop offset="0.5" stop-color="#1aa0ef"/><stop offset="1" stop-color="#0a6fd3"/></linearGradient></defs><path fill="url(#win)" d="M1.2 0H14.2V14H0V1.2A1.2 1.2 0 0 1 1.2 0zM15.8 0H28.8A1.2 1.2 0 0 1 30 1.2V14H15.8zM0 15.5H14.2V29.5H1.2A1.2 1.2 0 0 1 0 28.3zM15.8 15.5H30V28.3A1.2 1.2 0 0 1 28.8 29.5H15.8z"/></svg>
<!-- search pill -->
<div class="a" style="left:686px;top:1150px;width:274px;height:40px;border-radius:20px;background:linear-gradient(90deg,#f8f5ef,#f5f5f4);border:1px solid #d2d0cc"></div>
<svg style="left:700.5px;top:1161.5px" width="18" height="18" viewBox="0 0 18 18"><circle cx="7.3" cy="7.3" r="6.2" fill="none" stroke="#1b1b1b" stroke-width="1.8"/><path d="M11.8 11.8L17 17" stroke="#1b1b1b" stroke-width="2" stroke-linecap="round"/></svg>
<div class="a" style="left:732px;top:1159.5px;font-size:16.5px;line-height:20px;color:#5d5d5d"><span class="sx" style="transform:scaleX(0.97)">Pesquisar</span></div>
<svg style="left:885px;top:1150px" width="75" height="42" viewBox="0 0 75 42"><defs><linearGradient id="sky" x1="0" y1="0" x2="0" y2="1"><stop offset="0" stop-color="#c3e0ec"/><stop offset="0.45" stop-color="#f3e5c8"/><stop offset="0.8" stop-color="#f6dca6"/><stop offset="1" stop-color="#eed49a"/></linearGradient><linearGradient id="rock" x1="0" y1="0" x2="1" y2="0.3"><stop offset="0" stop-color="#cdc6b6"/><stop offset="0.6" stop-color="#8e8f92"/><stop offset="1" stop-color="#5d6470"/></linearGradient><linearGradient id="ech" x1="0" y1="0" x2="1" y2="1"><stop offset="0" stop-color="#d98a22"/><stop offset="1" stop-color="#b0620f"/></linearGradient></defs><path d="M12 35C8 30 8 22 11 17 13 13 18 12 22 12 22 8 26 5 31 6 35 3 41 4 44 6 48 4 53 5 55 9 60 9 64 12 65 17 69 20 69 28 67 33 65 36 60 36.5 55 36.5H18C15 36.5 13 36 12 35z" fill="url(#sky)"/><path d="M12.5 33.5C14 30 18 29 22 29 25 29 27 32 28 32.5 32 31 40 31 50 31.5 58 32 64 32.5 65 33.5 64 36 60 36.5 55 36.5H20C15 36.5 12.5 35.5 12.5 33.5z" fill="url(#rock)"/><path d="M23 31C21 24 18 16 15 7" fill="none" stroke="#2f7a55" stroke-width="1.2"/><ellipse cx="14.8" cy="11" rx="1.6" ry="4.5" fill="#4f9a72" transform="rotate(-15 14.8 11)"/><ellipse cx="19.5" cy="14.5" rx="1.5" ry="3.8" fill="#4f9a72" transform="rotate(10 19.5 14.5)"/><ellipse cx="14.5" cy="16" rx="1.4" ry="3.5" fill="#4f9a72" transform="rotate(-60 14.5 16)"/><ellipse cx="22" cy="20" rx="1.3" ry="3.3" fill="#4f9a72" transform="rotate(15 22 20)"/><ellipse cx="17" cy="25" rx="1.4" ry="3.6" fill="#4f9a72" transform="rotate(-35 17 25)"/><path d="M36 29.5L37.5 33 39.5 33 39 29zM42 29.5L42.5 33.5 45 33.5 45 29zM51 29.5L51.5 33 54 33 53.5 29zM56.5 29.5L57 33 59.5 33 59 29z" fill="#9a5510"/><ellipse cx="46" cy="21.5" rx="17" ry="11" fill="url(#ech)"/><path d="M36 15L41 12M40 19L46 15M44 23L51 18M49 26L56 21M53 15L58 13M55 19L61 17M48 11L53 10" stroke="#f0b040" stroke-width="1.6" stroke-linecap="round"/><ellipse cx="35.5" cy="25.5" rx="6" ry="4.5" fill="#b86a18"/><path d="M26.2 28L31.5 24.8 32.5 27z" fill="#454652"/><circle cx="34.3" cy="24.5" r="0.7" fill="#333"/></svg>
<!-- task view -->
<div class="a" style="left:984px;top:1156px;width:21.5px;height:19.5px;border-radius:2px;background:linear-gradient(135deg,#ffffff,#f0f0f0);box-shadow:0 0 0 0.5px #d8d8d8"></div>
<div class="a" style="left:976px;top:1164px;width:22.5px;height:20px;border-radius:2px;background:#1c1c1c"></div>
<div class="a" style="left:984px;top:1164px;width:14.5px;height:11.5px;background:linear-gradient(135deg,#a9a9a9,#d9d9d9)"></div>
<!-- copilot -->
<svg style="left:1026px;top:1150px" width="40" height="40" viewBox="0 0 40 40"><defs><linearGradient id="cpl" x1="0" y1="0" x2="0" y2="1"><stop offset="0" stop-color="#1fb5f8"/><stop offset="0.35" stop-color="#1b8fd8"/><stop offset="0.65" stop-color="#6bb844"/><stop offset="1" stop-color="#f4d000"/></linearGradient><linearGradient id="cpr" x1="0.2" y1="1" x2="0.8" y2="0"><stop offset="0" stop-color="#ffb347"/><stop offset="0.5" stop-color="#f2568a"/><stop offset="1" stop-color="#b048ee"/></linearGradient></defs><path d="M22 6Q26.5 6 27.5 10L28.8 13.3H19L20 8z" fill="#1a56d8"/><path d="M12.5 25H21.5L19 33Q14.5 33 13.5 30z" fill="#f5603a"/><path d="M11.5 6H22L16 25H8Q5 25 5.5 21.5L8.5 9Q9.3 6 11.5 6z" fill="url(#cpl)"/><path d="M24.3 13.3H31.5Q35 13.3 34.3 17L31 29.5Q30 33 26.5 33H18.3z" fill="url(#cpr)"/></svg>
<!-- explorer folder -->
<svg style="left:1085.5px;top:1156.5px" width="30.5" height="27" viewBox="0 0 30.5 27"><path d="M0 2A2 2 0 0 1 2 0H10L13 3H28.5A2 2 0 0 1 30.5 5V25A2 2 0 0 1 28.5 27H2A2 2 0 0 1 0 25z" fill="#e8a317"/><path d="M0 6.5H30.5V25A2 2 0 0 1 28.5 27H2A2 2 0 0 1 0 25z" fill="#fcd35d"/><path d="M5.5 27V21A1.5 1.5 0 0 1 7 19.5H23.5A1.5 1.5 0 0 1 25 21V27z" fill="#1e88e5"/><path d="M9 23H21.5" stroke="#0f5fae" stroke-width="1.2"/></svg>
<!-- edge -->
<svg style="left:1135px;top:1150px" width="40" height="40" viewBox="0 0 40 40"><defs><linearGradient id="eg1" x1="0" y1="0.3" x2="1" y2="0.7"><stop offset="0" stop-color="#2fb5f0"/><stop offset="0.5" stop-color="#2cc3c8"/><stop offset="1" stop-color="#4fdc50"/></linearGradient><linearGradient id="eg2" x1="0" y1="0" x2="0.3" y2="1"><stop offset="0" stop-color="#1692e3"/><stop offset="1" stop-color="#0a6acb"/></linearGradient></defs><path d="M6 17C7 9 13 5 21 5 30 5 36 11 36 18 36 22.5 33 24.5 29 24.5 25.5 24.5 23.5 23 23.5 21.5 25 20.5 25 18 23 17 19 13 10 12 6 17z" fill="url(#eg1)"/><path d="M6 17C10 12 19 13 23 17 20 15.5 16.5 17 15.5 20.5 14 25 15.5 31 20 35 12 34.5 6 28 6 20z" fill="url(#eg2)"/><path d="M15.5 20.5C16.5 17 20 15.5 23 17 21 16.5 18.5 18 18.5 21 18.5 25 23 28 28 28 30.5 28 32.5 27.5 34 27 31 32 26 35 20 35 15.5 31 14 25 15.5 20.5z" fill="#11509c"/></svg>
<div class="a" style="left:1152px;top:1190.5px;width:8px;height:3px;border-radius:1.5px;background:#858585"></div>
<!-- store -->
<svg style="left:1196px;top:1156px" width="29" height="29" viewBox="0 0 29 29"><defs><linearGradient id="stg" x1="0" y1="0" x2="1" y2="1"><stop offset="0" stop-color="#1f63b5"/><stop offset="1" stop-color="#1b3767"/></linearGradient></defs><path d="M8 5.5V2.2A1.5 1.5 0 0 1 9.5 0.7H19.5A1.5 1.5 0 0 1 21 2.2V5.5" fill="none" stroke="#2fb8f5" stroke-width="1.8"/><path d="M2 4H27A2 2 0 0 1 29 6V24.5A4 4 0 0 1 25 28.5H4A4 4 0 0 1 0 24.5V6A2 2 0 0 1 2 4z" fill="url(#stg)"/><path d="M9 10.5H14V15.5H9z" fill="#f25022"/><path d="M15 10.5H20V15.5H15z" fill="#7fba00"/><path d="M9 16.5H14V21.5H9z" fill="#00a4ef"/><path d="M15 16.5H20V21.5H15z" fill="#ffb900"/></svg>
<!-- vscode active -->
<div class="a" style="left:1242px;top:1146px;width:48px;height:48px;border-radius:5px;background:#f6f5f8;border:1px solid #e6e4e8"></div>
<svg style="left:1250.5px;top:1155px" width="30.5" height="30" viewBox="0 0 100 100"><path fill="#0a6bbd" d="M96.46 10.8L75.86.87a6.23 6.23 0 0 0-7.1 1.2L29.33 38.04 12.15 25a4.16 4.16 0 0 0-5.32.24l-5.5 5a4.17 4.17 0 0 0 0 6.16L16.23 50 1.330 63.6a4.17 4.17 0 0 0 0 6.16l5.5 5a4.16 4.16 0 0 0 5.32.24l17.18-13.040 39.43 35.97a6.22 6.22 0 0 0 7.1 1.2l20.6-9.92A6.25 6.25 0 0 0 100 83.6V16.4a6.25 6.25 0 0 0-3.54-5.6zM75.01 72.7L45.1 50l29.9-22.7z"/><path fill="#1f9cf0" d="M75.86.87a6.23 6.23 0 0 0-7.1 1.2L68 2.8 75.01 27.3V72.7L68 97.2l.76.7a6.22 6.22 0 0 0 7.1 1.2l20.6-9.92A6.25 6.25 0 0 0 100 83.6V16.4a6.25 6.25 0 0 0-3.54-5.6z"/></svg>
<div class="a" style="left:1255.5px;top:1190px;width:20.5px;height:3.5px;border-radius:2px;background:#0067c0"></div>
<!-- tray -->
<svg style="left:1540.5px;top:1165.5px" width="15" height="8" viewBox="0 0 15 8"><path d="M1 7.5L7.5 1 14 7.5" fill="none" stroke="#1b1b1b" stroke-width="1.4"/></svg>
<svg style="left:1577.5px;top:1159.5px" width="21" height="21" viewBox="0 0 21 21"><path d="M3 9A7.5 7.5 0 0 1 16.5 4.5M16.5 1V4.8H12.8M18 12A7.5 7.5 0 0 1 4.5 16.5M4.5 20V16.2H8.2" fill="none" stroke="#1b1b1b" stroke-width="1.3"/><circle cx="15.5" cy="15.5" r="4.6" fill="#f7930e"/></svg>
<svg style="left:1617.5px;top:1161.5px" width="21" height="19" viewBox="0 0 21 19"><path d="M4.5 15.5A4 4 0 0 1 4 7.5 6 6 0 0 1 15.5 6 4.5 4.5 0 0 1 17 14.5z" fill="#c8c8c8" stroke="#5c5c5c" stroke-width="1.1"/><circle cx="15" cy="13" r="5.6" fill="#1a73e8"/><path d="M15 11.8V16M15 9.8V10.6" stroke="#ffffff" stroke-width="1.4"/></svg>
<div class="a" style="left:1661.5px;top:1160.5px;font-size:15px;line-height:20px;color:#1b1b1b"><span class="sx" style="transform:scaleX(0.86)">POR</span></div>
<svg style="left:1712.5px;top:1162px" width="21" height="15" viewBox="0 0 21 15"><path d="M1 5.5A13 13 0 0 1 20 5.5M4 8.7A8.5 8.5 0 0 1 17 8.7M7 11.7A4 4 0 0 1 14 11.7" fill="none" stroke="#1b1b1b" stroke-width="1.5"/><circle cx="10.5" cy="13.5" r="1.5" fill="#1b1b1b"/></svg>
<svg style="left:1742.5px;top:1160.5px" width="21" height="17" viewBox="0 0 21 17"><path d="M1 5.5H4.5L9.5 1.5V15.5L4.5 11.5H1z" fill="none" stroke="#1b1b1b" stroke-width="1.3" stroke-linejoin="round"/><path d="M12.5 5.5A3.5 3.5 0 0 1 12.5 11.5M15 3.5A6.5 6.5 0 0 1 15 13.5" fill="none" stroke="#1b1b1b" stroke-width="1.3"/><path d="M17.5 1.5A9.5 9.5 0 0 1 17.5 15.5" fill="none" stroke="#b8b8b8" stroke-width="1.2"/></svg>
<svg style="left:1773px;top:1164px" width="25.5" height="12" viewBox="0 0 25.5 12"><rect x="0.8" y="0.8" width="21.5" height="10.4" rx="2.8" fill="none" stroke="#1b1b1b" stroke-width="1.5"/><rect x="3" y="3" width="8" height="6" rx="1" fill="#1b1b1b"/><path d="M24 4V8" stroke="#1b1b1b" stroke-width="1.6" stroke-linecap="round"/></svg>
<div class="a" style="left:1860px;top:1150.5px;font-size:15px;line-height:18px;color:#1b1b1b"><span class="sx" style="transform:scaleX(0.945)">11:43</span></div>
<div class="a" style="left:1818.5px;top:1170px;font-size:15px;line-height:18px;color:#1b1b1b"><span class="sx" style="transform:scaleX(1.01)">19/03/2026</span></div>
</body></html>
